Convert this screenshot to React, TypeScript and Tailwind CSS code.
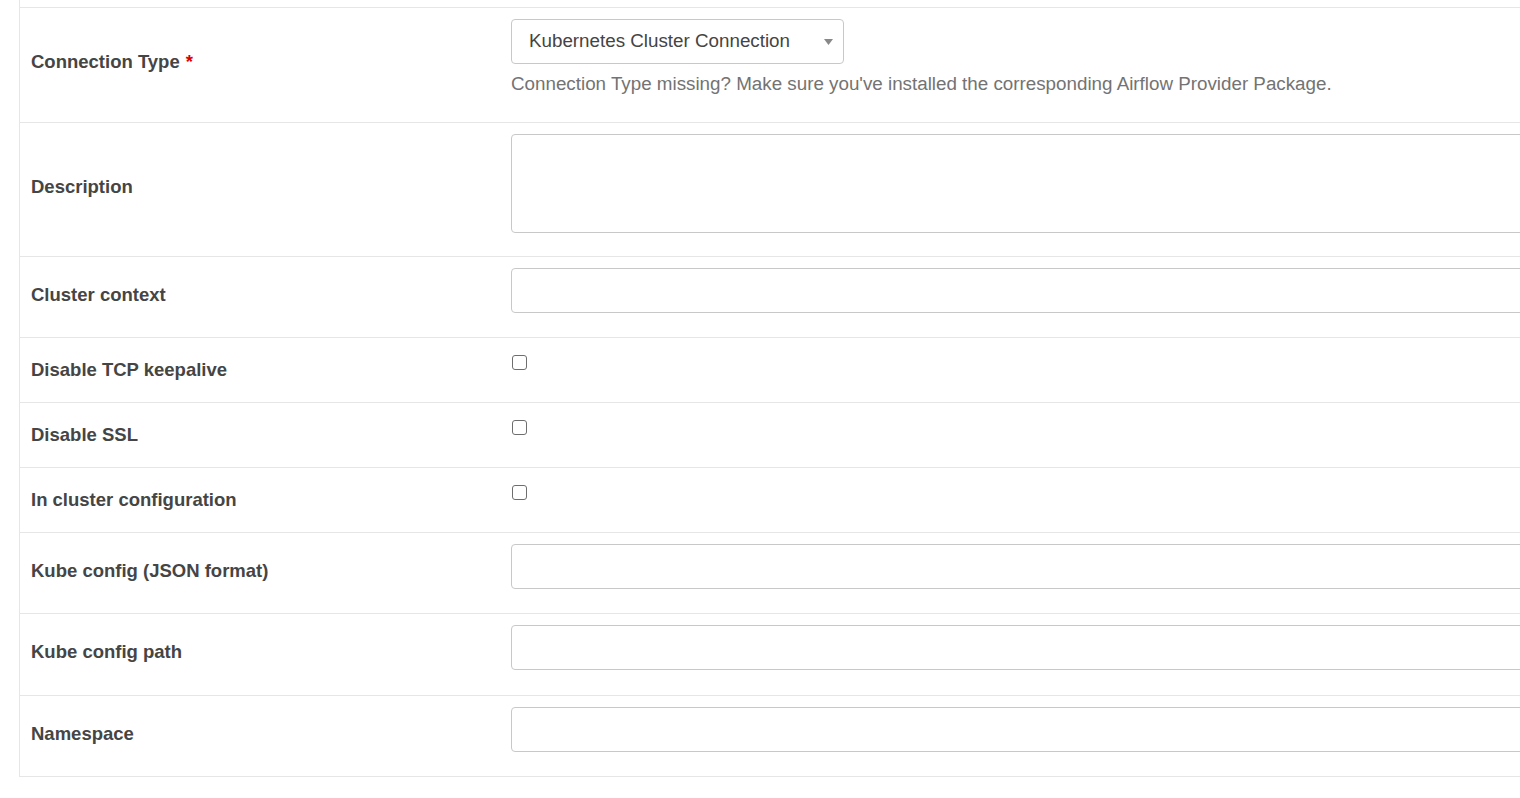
import React from 'react';

type Field = {
  label: string;
  kind: 'input' | 'textarea' | 'checkbox';
  height: string;
};

const fields: Field[] = [
  { label: 'Description', kind: 'textarea', height: 'h-[134px]' },
  { label: 'Cluster context', kind: 'input', height: 'h-[81px]' },
  { label: 'Disable TCP keepalive', kind: 'checkbox', height: 'h-[65px]' },
  { label: 'Disable SSL', kind: 'checkbox', height: 'h-[65px]' },
  { label: 'In cluster configuration', kind: 'checkbox', height: 'h-[65px]' },
  { label: 'Kube config (JSON format)', kind: 'input', height: 'h-[81px]' },
  { label: 'Kube config path', kind: 'input', height: 'h-[82px]' },
  { label: 'Namespace', kind: 'input', height: 'h-[81px]' },
];

const FieldControl: React.FC<{ kind: Field['kind'] }> = ({ kind }) => {
  if (kind === 'textarea') {
    return <div className="mt-[11px] h-[99px] w-full rounded-[4px] border border-[#c8c8c8] bg-white" />;
  }
  if (kind === 'checkbox') {
    return <div className="mt-[17px] ml-[1px] h-[15px] w-[15px] rounded-[3px] border border-[#6e6e6e] bg-white" />;
  }
  return <div className="mt-[11px] h-[45px] w-full rounded-[4px] border border-[#c8c8c8] bg-white" />;
};

export default function App() {
  return (
    <div className="h-[798px] w-[1520px] overflow-hidden bg-white pl-[19px] font-['Liberation_Sans',Arial,sans-serif] text-[18.8px] text-[#333]">
      <div className="w-[1700px] border-b border-l border-[#e6e6e6]">
        <div className="h-[7px]" />

        {/* Connection type row */}
        <div className="grid h-[115px] grid-cols-[480px_1fr] border-t border-[#e6e6e6]">
          <div className="flex items-center pb-[6px] pl-[11px] text-[18.5px] font-bold text-[#454545]">
            Connection Type <span className="ml-[6px] text-[#d00]">*</span>
          </div>
          <div className="pl-[11px] pt-[11px]">
            <div className="flex h-[45px] w-[333px] items-center justify-between rounded-[4px] border border-[#c8c8c8] bg-white pl-[17px] pr-[10px] text-[#444]">
              <span>Kubernetes Cluster Connection</span>
              <svg width="9" height="6" viewBox="0 0 9 6" aria-hidden="true">
                <path d="M0 0h9L4.5 6z" fill="#888" />
              </svg>
            </div>
            <p className="mt-[7px] leading-[26px] text-[#737373]">
              Connection Type missing? Make sure you've installed the corresponding Airflow Provider Package.
            </p>
          </div>
        </div>

        {fields.map(f => (
          <div key={f.label} className={`grid grid-cols-[480px_1fr] border-t border-[#e6e6e6] ${f.height}`}>
            <div className={`flex items-center pl-[11px] text-[18.5px] font-bold text-[#454545] ${f.kind === 'checkbox' ? 'pb-[1px]' : 'pb-[5px]'}`}>
              {f.label}
            </div>
            <div className="pl-[11px]">
              <FieldControl kind={f.kind} />
            </div>
          </div>
        ))}
      </div>
    </div>
  );
}
